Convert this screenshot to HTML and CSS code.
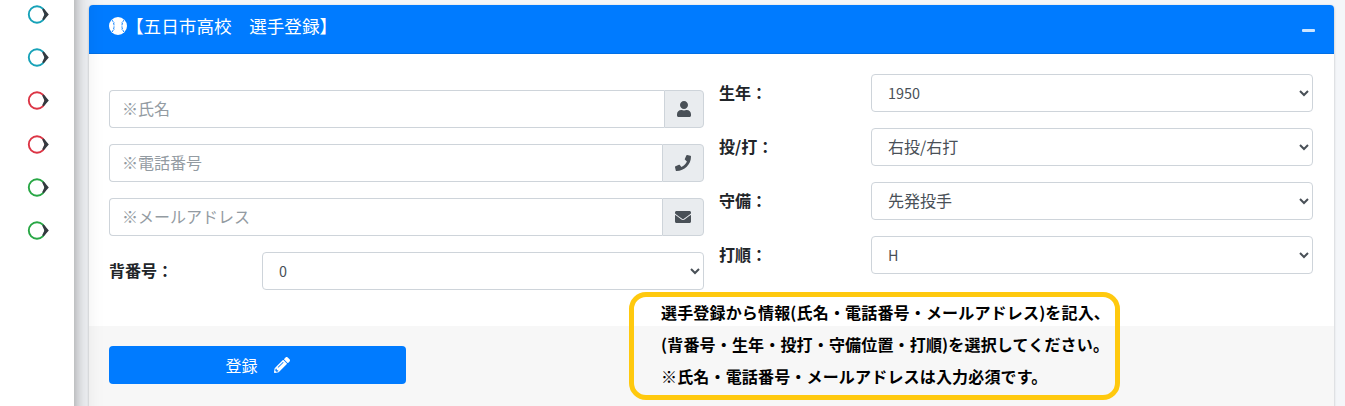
FILE: index.html
```html
<!DOCTYPE html>
<html lang="ja">
<head>
<meta charset="utf-8">
<title>選手登録</title>
<link rel="stylesheet" href="styles.css">
</head>
<body>
<svg class="defs" width="0" height="0">
  <symbol id="nav" viewBox="0 0 22 20"><circle cx="10" cy="10.5" r="8.2" fill="none" stroke="currentColor" stroke-width="1.9"/><path d="M15.2 5.6l1.6-1 5 5.8-5 5.8-1.6-1 2.2-4.8z" fill="#343a40"/></symbol>
</svg>
<div class="page">
  <nav class="sidebar">
    <a class="nav-item info"><svg><use href="#nav"/></svg></a>
    <a class="nav-item info"><svg><use href="#nav"/></svg></a>
    <a class="nav-item danger"><svg><use href="#nav"/></svg></a>
    <a class="nav-item danger"><svg><use href="#nav"/></svg></a>
    <a class="nav-item success"><svg><use href="#nav"/></svg></a>
    <a class="nav-item success"><svg><use href="#nav"/></svg></a>
  </nav>
  <main class="card">
    <header class="card-header">
      <svg class="ball" viewBox="0 0 18 18"><circle cx="9" cy="9" r="9" fill="#fff"/><path d="M2.9 2.6Q7.2 9 2.9 15.4M15.1 2.6Q10.8 9 15.1 15.4" fill="none" stroke="#007bff" stroke-width=".9" stroke-dasharray="2.6 1"/><path d="M4 6.2l2-.7M4 11.8l2 .7M14 6.2l-2-.7M14 11.8l-2 .7" stroke="#007bff" stroke-width=".4"/></svg>
      <h3 class="title">【五日市高校　選手登録】</h3>
      <button class="collapse" aria-label="collapse"><span></span></button>
    </header>
    <div class="card-body">
      <div class="column left">
        <div class="group"><input placeholder="※氏名"><span class="addon narrow"><svg width="14" height="16" viewBox="0 0 448 512"><path d="M224 256c70.7 0 128-57.3 128-128S294.7 0 224 0 96 57.3 96 128s57.3 128 128 128zm89.6 32h-16.7c-22.2 10.2-46.9 16-72.9 16s-50.6-5.8-72.9-16h-16.7C60.2 288 0 348.2 0 422.4V464c0 26.5 21.5 48 48 48h352c26.5 0 48-21.5 48-48v-41.6c0-74.2-60.2-134.4-134.4-134.4z"/></svg></span></div>
        <div class="group"><input placeholder="※電話番号"><span class="addon"><svg width="16" height="16" viewBox="0 0 512 512"><path d="M493.4 24.6l-104-24c-11.3-2.6-22.9 3.3-27.5 13.9l-48 112c-4.2 9.8-1.4 21.3 6.9 28l60.6 49.6c-36 76.7-98.9 140.5-177.2 177.2l-49.6-60.6c-6.8-8.3-18.2-11.1-28-6.9l-112 48C3.9 366.5-2 378.1.6 389.4l24 104C27.1 504.2 36.7 512 48 512c256.1 0 464-207.5 464-464 0-11.2-7.7-20.9-18.6-23.4z"/></svg></span></div>
        <div class="group"><input placeholder="※メールアドレス"><span class="addon"><svg width="16" height="16" viewBox="0 0 512 512"><path d="M502.3 190.8c3.9-3.1 9.7-.2 9.7 4.7V400c0 26.5-21.5 48-48 48H48c-26.5 0-48-21.5-48-48V195.6c0-5 5.7-7.8 9.7-4.7 22.4 17.4 52.1 39.5 154.1 113.6 21.1 15.4 56.7 47.8 92.2 47.6 35.7.3 72-32.8 92.3-47.6 102-74.1 131.6-96.3 154-113.7zM256 320c23.2.4 56.6-29.2 73.4-41.4 132.7-96.3 142.8-104.7 173.4-128.7 5.8-4.5 9.2-11.5 9.2-18.9v-19c0-26.5-21.5-48-48-48H48c-26.5 0-48 21.5-48 48v19c0 7.4 3.4 14.3 9.2 18.9 30.6 23.9 40.7 32.4 173.4 128.7 16.8 12.2 50.2 41.8 73.4 41.4z"/></svg></span></div>
        <div class="field"><label>背番号：</label><select class="latin"><option>0</option></select></div>
      </div>
      <div class="column right">
        <div class="field"><label>生年：</label><select class="latin"><option>1950</option></select></div>
        <div class="field"><label>投/打：</label><select><option>右投/右打</option></select></div>
        <div class="field"><label>守備：</label><select><option>先発投手</option></select></div>
        <div class="field"><label>打順：</label><select class="latin"><option>H</option></select></div>
      </div>
    </div>
    <footer class="card-footer">
      <button class="submit">登録<svg width="16" height="16" viewBox="0 0 512 512"><path d="M497.9 142.1l-46.1 46.1c-4.7 4.7-12.3 4.7-17 0l-111-111c-4.7-4.7-4.7-12.3 0-17l46.1-46.1c18.7-18.7 49.1-18.7 67.9 0l60.1 60.1c18.8 18.7 18.8 49.1 0 67.9zM284.2 99.8L21.6 362.4.4 483.9c-2.9 16.4 11.4 30.6 27.8 27.8l121.5-21.3 262.6-262.6c4.7-4.7 4.7-12.3 0-17l-111-111c-4.8-4.7-12.4-4.7-17.1 0zM124.1 339.9c-5.5-5.5-5.5-14.3 0-19.8l154-154c5.5-5.5 14.3-5.5 19.8 0s5.5 14.3 0 19.8l-154 154c-5.5 5.5-14.3 5.5-19.8 0zM88 424h48v36.3l-64.5 11.3-31.1-31.1L51.7 376H88v48z"/></svg></button>
    </footer>
  </main>
  <aside class="note">
    <p>選手登録から情報(氏名・電話番号・メールアドレス)を記入、</p>
    <p>(背番号・生年・投打・守備位置・打順)を選択してください。</p>
    <p>※氏名・電話番号・メールアドレスは入力必須です。</p>
  </aside>
</div>
</body>
</html>
```

FILE: styles.css
```css
* { box-sizing: border-box; }
body {
  margin: 0;
  background: #f4f6f9;
  color: #212529;
  font: 16px/24px "Noto Sans CJK JP", sans-serif;
  overflow: hidden;
}
.defs { position: absolute; }
.page { position: relative; display: flex; height: 406px; overflow: hidden; }
.sidebar {
  position: relative;
  z-index: 1;
  flex: none;
  width: 74px;
  height: 500px;
  margin-top: -40px;
  padding: 44px 0 0 27px;
  background: #fff;
  box-shadow: 0 14px 28px rgba(0,0,0,.25), 0 10px 10px rgba(0,0,0,.22);
}
.nav-item { display: block; height: 43.2px; }
.nav-item svg { display: block; width: 22px; height: 20px; }
.info { color: #17a2b8; }
.danger { color: #dc3545; }
.success { color: #28a745; }
.card {
  display: flex;
  flex-direction: column;
  width: 1245px;
  height: 420px;
  margin: 5px 0 0 15px;
  background: #fff;
  border-radius: 4px;
  box-shadow: 0 0 1px rgba(0,0,0,.125), 0 1px 3px rgba(0,0,0,.2);
}
.card-header {
  display: flex;
  flex: none;
  height: 49px;
  padding: 0 19px 0 20px;
  background: #007bff;
  border-bottom: 1px solid #006fe6;
  border-radius: 4px 4px 0 0;
  color: #fff;
}
.ball { width: 18px; height: 18px; margin-top: 12px; }
.title { margin: 8px 0 0 -1px; font-size: 17.6px; font-weight: 400; line-height: 26px; }
.collapse { margin: 24px 0 0 auto; padding: 0; height: 3px; border: 0; background: none; }
.collapse span { display: block; width: 13px; height: 3px; border-radius: 1px; background: #cce5ff; }
.card-body { display: flex; gap: 15px; height: 272px; flex: none; padding: 20px 20px 0; }
.column { display: flex; flex-direction: column; gap: 16px; }
.left { width: 595px; padding-top: 16px; }
.right { width: 594px; }
.group { display: flex; height: 38px; }
input, select {
  min-width: 0;
  height: 38px;
  padding: 5px 12px 7px;
  border: 1px solid #ced4da;
  border-radius: 4px;
  background: #fff;
  color: #495057;
  font: inherit;
}
input { flex: 1; border-right: 0; border-radius: 4px 0 0 4px; }
input::placeholder { color: #939ba2; opacity: 1; }
select { width: 442px; padding: 4px 12px 8px; }
select.latin { padding: 5px 12px 7px; font-size: 14.4px; }
.addon {
  display: flex;
  align-items: center;
  justify-content: center;
  width: 42px;
  border: 1px solid #ced4da;
  border-radius: 0 4px 4px 0;
  background: #e9ecef;
}
.narrow { width: 40px; }
.addon svg { fill: #495057; }
.field { display: flex; justify-content: space-between; height: 38px; }
.field label { padding-top: 6px; font-weight: 700; }
.card-footer { flex: 1; padding: 20px; background: #f7f7f7; }
.submit {
  display: flex;
  align-items: center;
  justify-content: center;
  gap: 16px;
  width: 297px;
  height: 38px;
  padding: 0 0 1px;
  border: 0;
  border-radius: 4px;
  background: #007bff;
  color: #fff;
  font: inherit;
}
.submit svg { fill: #fff; }
/* Callout laid over the form and its footer */
.note {
  position: absolute;
  z-index: 2;
  left: 629px;
  top: 292px;
  width: 491px;
  height: 108px;
  padding: 0 0 0 27px;
  border: 5px solid #ffc90e;
  border-radius: 17px;
  color: #000;
  font-weight: 700;
  line-height: 32px;
  letter-spacing: .17px;
  white-space: nowrap;
}
.note p { margin: -1px 0 1px; }
```
